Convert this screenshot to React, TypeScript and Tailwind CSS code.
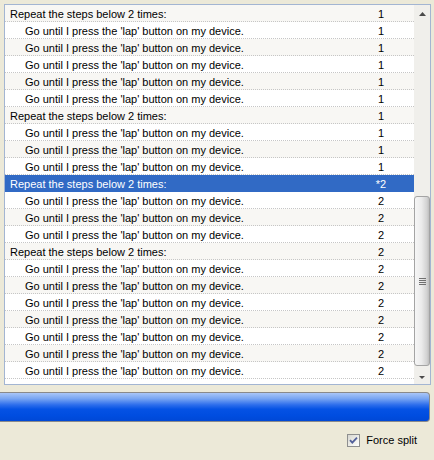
import React from "react";

type Step = { text: string; count: string; indent?: boolean };

const repeat = "Repeat the steps below 2 times:";
const go = "Go until I press the 'lap' button on my device.";

function block(n: number, count: string): Step[] {
  return Array.from({ length: n }, () => ({ text: go, count, indent: true }));
}

const steps: Step[] = [
  { text: repeat, count: "1" },
  ...block(5, "1"),
  { text: repeat, count: "1" },
  ...block(3, "1"),
  { text: repeat, count: "*2" },
  ...block(3, "2"),
  { text: repeat, count: "2" },
  ...block(7, "2"),
];

const SELECTED = 10;

function StepRow({ step, index }: { step: Step; index: number }) {
  const selected = index === SELECTED;
  const bg = selected
    ? "bg-[#316ac5] text-white border-[#316ac5]"
    : index % 2 === 0
      ? "bg-[#f8f7f4] text-black border-[#c6c6c6]"
      : "bg-white text-black border-[#c6c6c6]";
  return (
    <div className={`flex h-[17px] shrink-0 border-b border-dotted ${bg}`}>
      <span
        className={`flex-1 whitespace-nowrap leading-[18px] ${step.indent ? "pl-[20px]" : "pl-[5px]"}`}
      >
        {step.text}
      </span>
      <span className="mr-[3px] w-[60px] text-center leading-[18px]">
        {step.count}
      </span>
    </div>
  );
}

function ScrollBar() {
  return (
    <div className="flex w-[16px] flex-col bg-[#f0efeb]">
      <div className="flex h-[17px] items-center justify-center pt-[1px]">
        <svg width="7" height="4" viewBox="0 0 7 4">
          <path d="M3.5 0 L7 4 L0 4 Z" fill="#4a4a4a" />
        </svg>
      </div>
      <div className="h-[174px]" />
      <div className="flex h-[170px] items-center justify-center rounded-[3px] border border-[#a4a4a4] bg-[linear-gradient(to_right,#f6f6f6,#ececec_45%,#d2d2d2_85%,#bdbdbd)]">
        <div className="flex flex-col gap-[1px]">
          {[0, 1, 2, 3].map((i) => (
            <div key={i} className="h-[1px] w-[7px] bg-[#707070]" />
          ))}
        </div>
      </div>
      <div className="flex-1" />
      <div className="flex h-[14px] items-center justify-center">
        <svg width="6" height="3" viewBox="0 0 6 3">
          <path d="M0 0 L6 0 L3 3 Z" fill="#4a4a4a" />
        </svg>
      </div>
    </div>
  );
}

export default function App() {
  return (
    <div className="flex h-[460px] w-[434px] flex-col overflow-hidden bg-[#ece9d8] font-['Liberation_Sans',Arial,sans-serif] text-[11px]">
      <div className="ml-[4px] mt-[4px] flex h-[381px] w-[427px] border border-[#a3b5d2] bg-white">
        <div className="flex flex-1 flex-col overflow-hidden">
          {steps.map((s, i) => (
            <StepRow key={i} step={s} index={i} />
          ))}
        </div>
        <ScrollBar />
      </div>

      <div className="mt-[7px] h-[30px] w-[430px] rounded-r-[4px] border border-l-0 border-[#8a8a8a] bg-[linear-gradient(to_bottom,#a9c6f8,#7aa6f2_20%,#2e6eec_42%,#0552e4_58%,#004de0_80%,#0048d6)]" />

      <div className="mt-[11px] flex items-center justify-end gap-[6px] pr-[17px]">
        <div className="flex h-[13px] w-[13px] items-center justify-center border border-[#8e8f8f] bg-[linear-gradient(135deg,#d6d6d0,#f4f4f0_70%,#ffffff)]">
          <svg width="9" height="9" viewBox="0 0 9 9">
            <path
              d="M1 4.2 L3.3 6.6 L8 1.6"
              fill="none"
              stroke="#52609a"
              strokeWidth="1.8"
            />
          </svg>
        </div>
        <span className="leading-[14px] text-black">Force split</span>
      </div>
    </div>
  );
}
